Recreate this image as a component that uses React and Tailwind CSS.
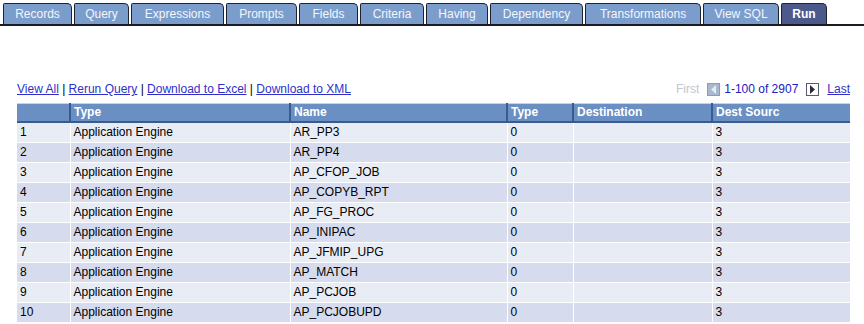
import React from 'react';

const tabs = [
  { label: 'Records', w: 69 },
  { label: 'Query', w: 55 },
  { label: 'Expressions', w: 93 },
  { label: 'Prompts', w: 71 },
  { label: 'Fields', w: 59 },
  { label: 'Criteria', w: 64 },
  { label: 'Having', w: 62 },
  { label: 'Dependency', w: 93 },
  { label: 'Transformations', w: 116 },
  { label: 'View SQL', w: 76 },
  { label: 'Run', w: 46, active: true },
];

const rows = [
  ['1', 'Application Engine', 'AR_PP3', '0', '', '3'],
  ['2', 'Application Engine', 'AR_PP4', '0', '', '3'],
  ['3', 'Application Engine', 'AP_CFOP_JOB', '0', '', '3'],
  ['4', 'Application Engine', 'AP_COPYB_RPT', '0', '', '3'],
  ['5', 'Application Engine', 'AP_FG_PROC', '0', '', '3'],
  ['6', 'Application Engine', 'AP_INIPAC', '0', '', '3'],
  ['7', 'Application Engine', 'AP_JFMIP_UPG', '0', '', '3'],
  ['8', 'Application Engine', 'AP_MATCH', '0', '', '3'],
  ['9', 'Application Engine', 'AP_PCJOB', '0', '', '3'],
  ['10', 'Application Engine', 'AP_PCJOBUPD', '0', '', '3'],
];

const cols = [
  { title: '', w: 53 },
  { title: 'Type', w: 220 },
  { title: 'Name', w: 217 },
  { title: 'Type', w: 66 },
  { title: 'Destination', w: 139 },
  { title: 'Dest Sourc', w: 138 },
];

function Arrow({ dir, enabled }) {
  return (
    <span
      className={`inline-flex items-center justify-center w-[13px] h-[13px] border ${
        enabled ? 'bg-white border-[#5a5a6a]' : 'bg-[#a9b8cf] border-[#8a9cb8]'
      }`}
    >
      <svg width="7" height="9" viewBox="0 0 7 9">
        {dir === 'left' ? (
          <polygon points="6,0 6,9 1,4.5" fill={enabled ? '#2a2a3a' : '#e6ecf4'} />
        ) : (
          <polygon points="1,0 1,9 6,4.5" fill={enabled ? '#2a2a3a' : '#e6ecf4'} />
        )}
      </svg>
    </span>
  );
}

export default function App() {
  return (
    <div className="w-[864px] h-[324px] bg-white overflow-hidden text-[12px]" style={{ fontFamily: '"Liberation Sans", Arial, sans-serif' }}>
      <div className="flex items-end gap-[2px] pl-[3px] pt-[4px] border-b-2 border-[#1a1a22] h-[26px]">
        {tabs.map(t => (
          <div
            key={t.label}
            style={{ width: t.w }}
            className={`h-[21px] flex items-center justify-center border-t border-l border-r border-[#1f2230] rounded-tr-[5px] rounded-tl-[2px] text-[12px] ${
              t.active ? 'bg-[#4b5a8b] text-white font-bold' : 'bg-[#7b9dcc] text-[#f4f6fb]'
            }`}
          >
            {t.label}
          </div>
        ))}
      </div>

      <div className="mt-[52px] ml-[17px] w-[833px]">
        <div className="flex items-center justify-between h-[22px]">
          <div className="text-black">
            <a className="text-[#2f2fc8] underline">View All</a>{' | '}
            <a className="text-[#2f2fc8] underline">Rerun Query</a>{' | '}
            <a className="text-[#2f2fc8] underline">Download to Excel</a>{' | '}
            <a className="text-[#2f2fc8] underline">Download to XML</a>
          </div>
          <div className="flex items-center">
            <span className="text-[#c2c6d2] mr-[8px]">First</span>
            <Arrow dir="left" />
            <span className="text-[#2020c0] ml-[4px] mr-[8px]">1-100 of 2907</span>
            <Arrow dir="right" enabled />
            <a className="text-[#2f2fc8] underline ml-[8px]">Last</a>
          </div>
        </div>

        <table className="border-collapse mt-[3px] table-fixed" style={{ width: 833 }}>
          <colgroup>
            {cols.map((c, i) => (
              <col key={i} style={{ width: c.w }} />
            ))}
          </colgroup>
          <thead>
            <tr className="h-[18px] bg-[#6a8fc2] border-t border-[#c8d4e6] border-b-2 border-b-[#3b5a8e]">
              {cols.map((c, i) => (
                <th
                  key={i}
                  className={`text-left font-bold text-white px-[3px] py-0 leading-[16px] ${
                    i > 0 ? 'border-l-2 border-l-[#3b5a8e]' : ''
                  }`}
                >
                  {c.title}
                </th>
              ))}
            </tr>
          </thead>
          <tbody>
            {rows.map((r, ri) => (
              <tr key={ri} className={`h-[20px] ${ri % 2 === 0 ? 'bg-[#e8ecf4]' : 'bg-[#d6dcee]'}`}>
                {r.map((cell, ci) => (
                  <td
                    key={ci}
                    className={`px-[3px] py-0 text-black leading-[19px] border-t border-white ${
                      ci > 0 ? 'border-l border-white' : ''
                    }`}
                  >
                    {cell}
                  </td>
                ))}
              </tr>
            ))}
          </tbody>
        </table>
      </div>
    </div>
  );
}
